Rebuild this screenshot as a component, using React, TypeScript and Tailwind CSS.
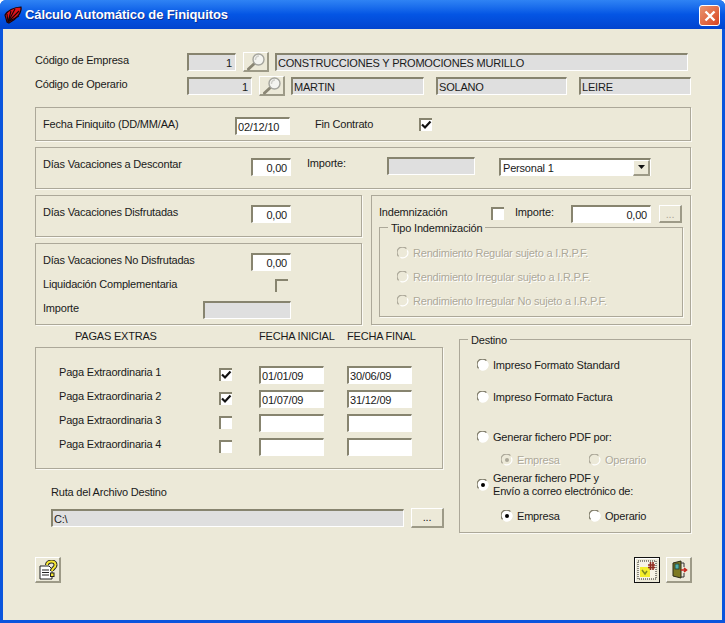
import type { ReactNode } from "react";

const sunken =
  "border-t-2 border-l-2 border-r border-b border-t-[#87846f] border-l-[#87846f] border-r-white border-b-white";
const raised =
  "border-t border-l border-r-2 border-b-2 border-t-white border-l-white border-r-[#9d9a87] border-b-[#9d9a87]";

function Field({
  value,
  width,
  on,
  right,
}: {
  value?: string;
  width: string;
  on?: boolean;
  right?: boolean;
}) {
  return (
    <div
      className={`h-[18px] shrink-0 overflow-hidden pl-[1px] pr-[3px] leading-[16px] whitespace-nowrap ${sunken} ${width} ${
        on ? "bg-white" : "bg-[#dfdfdf]"
      } ${right ? "text-right" : "text-left"}`}
    >
      {value}
    </div>
  );
}

function Check({ checked, disabled }: { checked?: boolean; disabled?: boolean }) {
  return (
    <div
      className={`h-[13px] w-[13px] shrink-0 border-t-2 border-l-2 border-t-[#87846f] border-l-[#87846f] ${
        disabled ? "bg-[#ece9d8]" : "bg-white"
      }`}
    >
      {checked && (
        <svg viewBox="0 0 11 11" className="h-[11px] w-[11px]">
          <path d="M1 4.5 L4 7.5 L9.5 1.5" fill="none" stroke="#111" strokeWidth="2.2" />
        </svg>
      )}
    </div>
  );
}

function Radio({ dot, disabled }: { dot?: boolean; disabled?: boolean }) {
  return (
    <svg viewBox="0 0 12 12" className="h-[12px] w-[12px] shrink-0">
      <circle cx="6" cy="6" r="5.5" fill={disabled ? "#ece9d8" : "#fff"} />
      <path d="M1.6 9.4 A5 5 0 0 1 9.4 1.6" fill="none" stroke={disabled ? "#aca899" : "#807d6c"} strokeWidth="1.3" />
      <path d="M10.2 3.4 A5 5 0 0 1 3.4 10.2" fill="none" stroke="#ffffff" strokeWidth="1.2" />
      {dot && <circle cx="6" cy="6" r="2" fill={disabled ? "#aca899" : "#000"} />}
    </svg>
  );
}

function Group({ className, children }: { className: string; children: ReactNode }) {
  return (
    <div className={`relative border border-[#aca899] shadow-[1px_1px_0_#fbfaf4] ${className}`}>
      {children}
    </div>
  );
}

function Legend({ children }: { children: ReactNode }) {
  return (
    <span className="absolute top-[-7px] left-[8px] bg-[#ece9d8] px-[3px] leading-[14px]">
      {children}
    </span>
  );
}

function RadioRow({
  text,
  dot,
  disabled,
  className,
}: {
  text: string;
  dot?: boolean;
  disabled?: boolean;
  className?: string;
}) {
  return (
    <div className={`flex items-center gap-[4px] ${className ?? ""}`}>
      <Radio dot={dot} disabled={disabled} />
      <span className={disabled ? "text-[#aca899] [text-shadow:1px_1px_0_#fff]" : ""}>{text}</span>
    </div>
  );
}

function Magnifier() {
  return (
    <svg viewBox="0 0 20 18" className="h-[18px] w-[20px]">
      <path d="M9 10 L2.5 16" stroke="#8a8674" strokeWidth="3" strokeLinecap="round" />
      <circle cx="12.5" cy="6.5" r="5.5" fill="#f4f4f0" stroke="#a5a59e" strokeWidth="1.4" />
      <path d="M9.5 7 A3.5 3.5 0 0 1 13 3" fill="none" stroke="#cfcfca" strokeWidth="1.5" />
    </svg>
  );
}

function HelpIcon() {
  return (
    <svg viewBox="0 0 20 20" className="h-[20px] w-[20px]">
      <path d="M2 6 H11 L14 9 V19 H2 Z" fill="#fff" stroke="#222" strokeWidth="1" />
      <path d="M4 10 H11 M4 12.5 H11 M4 15 H11" stroke="#222" strokeWidth="1" />
      <path
        d="M9 5 C9 1 17 0 17.5 4.5 C18 8 14 8 14 11"
        fill="none"
        stroke="#222"
        strokeWidth="4"
      />
      <path
        d="M9 5 C9 1 17 0 17.5 4.5 C18 8 14 8 14 11"
        fill="none"
        stroke="#f7e733"
        strokeWidth="2"
      />
      <rect x="12.5" y="13" width="3.5" height="3.5" fill="#f7e733" stroke="#222" strokeWidth="1" />
    </svg>
  );
}

function RunIcon() {
  return (
    <svg viewBox="0 0 20 20" className="h-[20px] w-[20px]">
      <rect x="1" y="1" width="18" height="18" fill="#f6f3e6" stroke="#222" strokeWidth="1" strokeDasharray="1 1" />
      <rect x="3" y="7" width="10" height="10" fill="#f3ee2c" />
      <path d="M5 10 L8 14 L10 11" fill="none" stroke="#7c8a20" strokeWidth="1.5" />
      <path d="M11 5 H18 M11 7.5 H18 M13.5 2 V10 M16 2 V10" fill="none" stroke="#8f2d22" strokeWidth="1.6" />
    </svg>
  );
}

function ExitIcon() {
  return (
    <svg viewBox="0 0 20 20" className="h-[20px] w-[20px]">
      <path d="M4 3 L12 1 V18 L4 16 Z" fill="#7d7a22" stroke="#2a2a18" strokeWidth="1" />
      <rect x="6" y="4" width="4" height="5" fill="#4fb0a8" stroke="#1d3a38" strokeWidth="0.8" />
      <path d="M12 3 H15 V7 M15 13 V17 H12" fill="none" stroke="#333" strokeWidth="1" />
      <path d="M12 10 H17 M15 8 L17.5 10 L15 12" fill="none" stroke="#c5251c" strokeWidth="1.6" />
    </svg>
  );
}

function Fan() {
  return (
    <svg viewBox="0 0 20 18" className="h-[18px] w-[20px]">
      <path d="M3 16 L1 9 C3 5 10 1 17 1 C18 6 13 13 5 17 Z" fill="#e0141c" stroke="#1a0508" strokeWidth="1.2" />
      <path d="M4 16 L3 8 M4 16 L7 5 M4 16 L11 3 M4 16 L15 5 M4 16 L15 10" stroke="#1a0508" strokeWidth="1.1" />
    </svg>
  );
}

function IconButton({ children, focus }: { children: ReactNode; focus?: boolean }) {
  return (
    <div
      className={`flex h-[26px] w-[26px] shrink-0 items-center justify-center bg-[#ece9d8] ${
        focus ? "border border-[#111] shadow-[inset_1px_1px_0_#fff]" : raised
      }`}
    >
      {children}
    </div>
  );
}

function MoreButton({ disabled, className }: { disabled?: boolean; className: string }) {
  return (
    <div
      className={`shrink-0 bg-[#ece9d8] text-center leading-[16px] ${raised} ${className} ${
        disabled ? "text-[#aca899]" : ""
      }`}
    >
      ...
    </div>
  );
}

const paymentRows = [
  { name: "Paga Extraordinaria 1", on: true, from: "01/01/09", to: "30/06/09" },
  { name: "Paga Extraordinaria 2", on: true, from: "01/07/09", to: "31/12/09" },
  { name: "Paga Extraordinaria 3", on: false, from: "", to: "" },
  { name: "Paga Extraordinaria 4", on: false, from: "", to: "" },
];

export default function App() {
  return (
    <div className="flex h-[623px] w-[725px] flex-col overflow-hidden rounded-t-[6px] bg-[#0a55dd] font-['Liberation_Sans',Arial,sans-serif] text-[11px] leading-[14px] tracking-[-0.2px] text-[#1a1a1a]">
      <div className="flex h-[29px] shrink-0 items-center bg-gradient-to-b from-[#2f83f4] via-[#0455e4] to-[#0244cf] pr-[5px] pl-[4px]">
        <Fan />
        <span className="ml-[1px] text-[13px] font-bold tracking-[-0.1px] text-white [text-shadow:1px_1px_0_#0f2f90]">
          Cálculo Automático de Finiquitos
        </span>
        <div className="mt-[2px] ml-auto flex h-[21px] w-[21px] items-center justify-center rounded-[3px] border border-white bg-gradient-to-br from-[#e8946f] to-[#d8411c]">
          <svg viewBox="0 0 12 12" className="h-[12px] w-[12px]">
            <path d="M1.5 1.5 L10.5 10.5 M10.5 1.5 L1.5 10.5" stroke="#fff" strokeWidth="2.4" />
          </svg>
        </div>
      </div>

      <div className="mx-[3px] mb-[3px] flex-1 bg-[#ece9d8] pt-[23px] pl-[32px]">
        <div className="flex h-[20px] items-center">
          <span className="w-[152px] -translate-y-[2px]">Código de Empresa</span>
          <Field value="1" width="w-[49px]" right />
          <div className={`ml-[7px] flex h-[20px] w-[26px] items-center justify-center ${raised}`}>
            <Magnifier />
          </div>
          <Field value="CONSTRUCCIONES Y PROMOCIONES MURILLO" width="ml-[6px] w-[413px]" />
        </div>
        <div className="mt-[4px] flex h-[20px] items-center">
          <span className="w-[152px] -translate-y-[2px]">Código de Operario</span>
          <Field value="1" width="w-[65px]" right />
          <div className={`ml-[7px] flex h-[20px] w-[26px] items-center justify-center ${raised}`}>
            <Magnifier />
          </div>
          <Field value="MARTIN" width="ml-[6px] w-[133px]" />
          <Field value="SOLANO" width="ml-[12px] w-[131px]" />
          <Field value="LEIRE" width="ml-[12px] w-[112px]" />
        </div>

        <Group className="mt-[11px] flex h-[34px] w-[656px] items-start pt-[9px] pl-[7px]">
          <span className="w-[192px]">Fecha Finiquito (DD/MM/AA)</span>
          <Field value="02/12/10" width="w-[55px]" on />
          <span className="ml-[25px] w-[104px]">Fin Contrato</span>
          <div className="pt-[1px]">
            <Check checked />
          </div>
        </Group>

        <Group className="mt-[6px] flex h-[42px] w-[656px] items-start pt-[9px] pl-[7px]">
          <span className="w-[208px]">Días Vacaciones a Descontar</span>
          <div className="mt-[1px]">
            <Field value="0,00" width="w-[40px]" on right />
          </div>
          <span className="ml-[16px] w-[80px] -translate-y-[1px]">Importe:</span>
          <Field width="w-[88px]" />
          <div className={`mt-[1px] ml-[24px] flex h-[18px] w-[152px] items-center justify-between bg-white pl-[2px] ${sunken}`}>
            <span>Personal 1</span>
            <div className={`flex h-[16px] w-[17px] items-center justify-center bg-[#ece9d8] ${raised}`}>
              <svg viewBox="0 0 7 4" className="h-[4px] w-[7px]">
                <path d="M0 0 H7 L3.5 4 Z" fill="#111" />
              </svg>
            </div>
          </div>
        </Group>

        <div className="mt-[6px] flex">
          <div className="w-[327px]">
            <Group className="flex h-[42px] items-start pt-[9px] pl-[7px]">
              <span className="w-[208px]">Días Vacaciones Disfrutadas</span>
              <Field value="0,00" width="w-[40px]" on right />
            </Group>
            <Group className="mt-[6px] h-[82px] pt-[9px] pl-[7px]">
              <div className="flex h-[18px]">
                <span className="w-[208px]">Días Vacaciones No Disfrutadas</span>
                <Field value="0,00" width="w-[40px]" on right />
              </div>
              <div className="mt-[8px] flex h-[13px] items-center">
                <span className="w-[232px] -translate-y-[2px]">Liquidación Complementaria</span>
                <Check disabled />
              </div>
              <div className="mt-[9px] flex h-[18px] items-start">
                <span className="w-[160px]">Importe</span>
                <Field width="w-[88px]" />
              </div>
            </Group>
          </div>

          <Group className="ml-[9px] h-[130px] w-[320px] pt-[9px] pl-[7px]">
            <div className="flex h-[18px] items-start">
              <span className="w-[112px]">Indemnización</span>
              <div className="mt-[2px]">
                <Check />
              </div>
              <span className="ml-[11px] w-[56px]">Importe:</span>
              <Field value="0,00" width="w-[80px]" on right />
              <MoreButton disabled className="ml-[8px] h-[18px] w-[23px]" />
            </div>
            <Group className="mt-[4px] h-[90px] w-[304px] pt-[18px] pl-[17px]">
              <Legend>Tipo Indemnización</Legend>
              <RadioRow disabled text="Rendimiento Regular sujeto a I.R.P.F." />
              <RadioRow disabled text="Rendimiento Irregular sujeto a I.R.P.F." className="mt-[10px]" />
              <RadioRow disabled text="Rendimiento Irregular No sujeto a I.R.P.F." className="mt-[10px]" />
            </Group>
          </Group>
        </div>

        <div className="flex">
          <div className="w-[408px]">
            <div className="flex h-[22px] items-center">
              <span className="ml-[40px] w-[184px]">PAGAS EXTRAS</span>
              <span className="w-[88px] whitespace-nowrap">FECHA INICIAL</span>
              <span>FECHA FINAL</span>
            </div>
            <Group className="h-[122px] pt-[18px] pl-[23px]">
              {paymentRows.map((row) => (
                <div key={row.name} className="mb-[6px] flex h-[18px] items-center">
                  <span className="w-[160px] -translate-y-[3px]">{row.name}</span>
                  <div className="-translate-y-[1px]">
                    <Check checked={row.on} />
                  </div>
                  <Field value={row.from} width="ml-[27px] w-[65px]" on />
                  <Field value={row.to} width="ml-[23px] w-[65px]" on />
                </div>
              ))}
            </Group>
            <div className="mt-[16px] pl-[16px]">Ruta del Archivo Destino</div>
            <div className="mt-[9px] flex items-center pl-[16px]">
              <Field value="C:\" width="w-[353px]" />
              <MoreButton className="ml-[7px] h-[20px] w-[33px]" />
            </div>
          </div>

          <Group className="mt-[14px] ml-[16px] h-[194px] w-[232px] pt-[18px] pl-[17px]">
            <Legend>Destino</Legend>
            <RadioRow text="Impreso Formato Standard" />
            <RadioRow text="Impreso Formato Factura" className="mt-[18px]" />
            <RadioRow text="Generar fichero PDF por:" className="mt-[26px]" />
            <div className="mt-[9px] ml-[24px] flex h-[14px]">
              <RadioRow disabled dot text="Empresa" className="w-[88px]" />
              <RadioRow disabled text="Operario" />
            </div>
            <div className="mt-[5px] flex items-center gap-[4px]">
              <Radio dot />
              <span className="leading-[13px]">
                Generar fichero PDF y
                <br />
                Envío a correo electrónico de:
              </span>
            </div>
            <div className="mt-[11px] ml-[24px] flex h-[14px]">
              <RadioRow dot text="Empresa" className="w-[88px]" />
              <RadioRow text="Operario" />
            </div>
          </Group>
        </div>

        <div className="mt-[24px] flex w-[657px] justify-between">
          <IconButton>
            <HelpIcon />
          </IconButton>
          <div className="flex gap-[6px]">
            <IconButton focus>
              <RunIcon />
            </IconButton>
            <IconButton>
              <ExitIcon />
            </IconButton>
          </div>
        </div>
      </div>
    </div>
  );
}
